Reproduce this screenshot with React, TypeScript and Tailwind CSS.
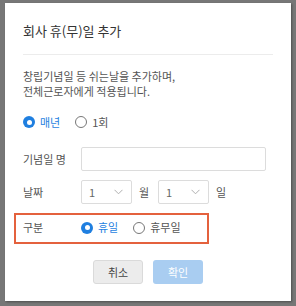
import React from "react";

const font = { fontFamily: '"Noto Sans CJK KR", "Noto Sans", sans-serif' };

function Radio({ checked, label }: { checked: boolean; label: string }) {
  return (
    <div className="flex items-center gap-[5px]">
      {checked ? (
        <span className="w-[12px] h-[12px] rounded-full bg-[#1f7fe0] flex items-center justify-center">
          <span className="w-[5px] h-[5px] rounded-full bg-white" />
        </span>
      ) : (
        <span className="w-[12px] h-[12px] rounded-full border border-[#777] bg-white" />
      )}
      <span className={checked ? "text-[#1f7fe0]" : "text-[#555]"}>{label}</span>
    </div>
  );
}

function Select() {
  return (
    <div className="w-[51px] h-[24px] border border-[#dcdcdc] rounded-[2px] flex items-center justify-between pl-[7px] pr-[8px] text-[#666]">
      <span>1</span>
      <svg width="9" height="6" viewBox="0 0 9 6" fill="none">
        <path d="M0.5 0.8 L4.5 4.8 L8.5 0.8" stroke="#b0b0b0" strokeWidth="1" />
      </svg>
    </div>
  );
}

export default function App() {
  return (
    <div className="w-[296px] h-[306px] bg-[#777777] pt-[3px] pl-[5px]" style={font}>
      <div className="w-[286px] h-[298px] bg-white shadow-[1px_1px_2px_rgba(0,0,0,0.35)] px-[18px] pt-[19px] flex flex-col text-[11px]">
        <div className="text-[13px] leading-[18px] text-[#333]">회사 휴(무)일 추가</div>
        <div className="mt-[14px] border-t border-[#ececec]" />
        <div className="mt-[14px] leading-[15px] text-[#555]">
          <div>창립기념일 등 쉬는날을 추가하며,</div>
          <div>전체근로자에게 적용됩니다.</div>
        </div>
        <div className="mt-[15px] h-[16px] flex items-center gap-[15px]">
          <Radio checked label="매년" />
          <Radio checked={false} label="1회" />
        </div>
        <div className="mt-[17px] flex items-center">
          <div className="w-[58px] text-[#555]">기념일 명</div>
          <div className="w-[185px] h-[24px] border border-[#dcdcdc] rounded-[2px]" />
        </div>
        <div className="mt-[9px] flex items-center text-[#555]">
          <div className="w-[58px]">날짜</div>
          <Select />
          <span className="ml-[7px] w-[19px]">월</span>
          <Select />
          <span className="ml-[7px]">일</span>
        </div>
        <div className="mt-[9px] ml-[-9px] w-[195px] h-[31px] border-2 border-[#e4613d] pl-[7px] flex items-center text-[#555]">
          <div className="w-[58px] -mt-[2px]">구분</div>
          <div className="flex items-center gap-[15px] -mt-[2px]">
            <Radio checked label="휴일" />
            <Radio checked={false} label="휴무일" />
          </div>
        </div>
        <div className="mt-[16px] flex justify-center gap-[10px]">
          <button className="w-[50px] h-[24px] rounded-[3px] bg-[#ececec] border border-[#dadada] text-[#444] text-[11px]">취소</button>
          <button className="w-[50px] h-[24px] rounded-[3px] bg-[#a9cdf1] text-white text-[11px]">확인</button>
        </div>
      </div>
    </div>
  );
}
